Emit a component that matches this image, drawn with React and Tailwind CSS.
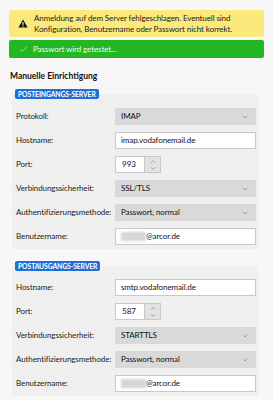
import { ChevronDown, ChevronUp, Check } from 'lucide-react'

const FONT = { fontFamily: 'Lato, "Liberation Sans", sans-serif' }

function Row({ label, children }) {
  return (
    <div className="flex h-[17px] items-center">
      <div className="w-[99px] shrink-0 whitespace-nowrap text-[8px] leading-[11px] tracking-[-0.1px] text-[#222]">{label}</div>
      {children}
    </div>
  )
}

function SelectBox({ value }) {
  return (
    <div className="flex h-[17px] w-[141px] items-center justify-between bg-[#d9d9d9] pl-[6px] pr-[7px] text-[8px] leading-[11px] tracking-[-0.1px] text-[#111]">
      <span>{value}</span>
      <ChevronDown className="h-[8px] w-[8px] text-[#666]" strokeWidth={1.5} />
    </div>
  )
}

function TextBox({ value, blurred }) {
  return (
    <div className="flex h-[17px] w-[141px] items-center border border-[#c8c8c8] bg-white pl-[5px] text-[8px] leading-[11px] tracking-[-0.1px] text-[#111]">
      {blurred && <span className="h-[9px] w-[25px] bg-[#d6d6d6] blur-[1px]" />}
      <span>{value}</span>
    </div>
  )
}

function PortBox({ value }) {
  return (
    <div className="flex h-[17px] items-stretch">
      <div className="flex w-[30px] items-center justify-end border border-[#c8c8c8] bg-white pr-[8px] text-[8px] leading-[11px] text-[#111]">
        {value}
      </div>
      <div className="flex w-[16px] flex-col items-center justify-center border border-l-0 border-[#c8c8c8] bg-[#e2e2e2] text-[#555]">
        <ChevronUp className="h-[7px] w-[8px]" strokeWidth={1.5} />
        <ChevronDown className="h-[7px] w-[8px]" strokeWidth={1.5} />
      </div>
    </div>
  )
}

function Section({ title, first, children }) {
  return (
    <div className="ml-[12px] flex w-[246px] flex-col">
      <div className="relative z-10 ml-[3px] flex h-[10px] self-start items-center rounded-[2px] bg-[#1f6fd6] px-[3px] text-[6.8px] font-bold leading-[8px] tracking-[-0.1px] text-white">
        {title}
      </div>
      <div className={`-mt-[5px] flex flex-col gap-[7px] bg-[#efefef] pb-[4px] pl-[4px] pr-[2px] ${first ? 'pt-[14px]' : 'pt-[13px]'}`}>
        {children}
      </div>
    </div>
  )
}

export default function App() {
  return (
    <div className="h-[400px] w-[273px] overflow-hidden bg-[#f7f7f7]" style={FONT}>
      <div className="mx-[9px] pt-[10px]">
        <div className="flex h-[27px] items-center gap-[6px] rounded-[2px] bg-[#fce97c] pl-[9px] text-[8px] leading-[11px] tracking-[-0.1px] text-[#222]">
          <svg width="10" height="9" viewBox="0 0 10 9" className="shrink-0">
            <path d="M5 0.5 L9.6 8.6 L0.4 8.6 Z" fill="#111" />
            <rect x="4.4" y="3" width="1.2" height="3" fill="#fce97c" />
            <rect x="4.4" y="6.7" width="1.2" height="1.1" fill="#fce97c" />
          </svg>
          <div className="whitespace-nowrap">
            Anmeldung auf dem Server fehlgeschlagen. Eventuell sind
            <br />
            Konfiguration, Benutzername oder Passwort nicht korrekt.
          </div>
        </div>
        <div className="mt-[3px] flex h-[18px] items-center gap-[5px] rounded-[2px] bg-[#24b624] pl-[10px] text-[8px] leading-[11px] tracking-[-0.1px] text-[#e8ffe8]">
          <Check className="h-[9px] w-[9px]" strokeWidth={1.5} />
          <span>Passwort wird getestet...</span>
        </div>
      </div>

      <div className="ml-[10px] mt-[12px] text-[8.5px] font-bold leading-[12px] text-[#111]">Manuelle Einrichtigung</div>

      <div className="mt-[7px]">
        <Section title="POSTEINGANGS-SERVER" first>
          <Row label="Protokoll:">
            <SelectBox value="IMAP" />
          </Row>
          <Row label="Hostname:">
            <TextBox value="imap.vodafonemail.de" />
          </Row>
          <Row label="Port:">
            <PortBox value="993" />
          </Row>
          <Row label="Verbindungssicherheit:">
            <SelectBox value="SSL/TLS" />
          </Row>
          <Row label="Authentifizierungsmethode:">
            <SelectBox value="Passwort, normal" />
          </Row>
          <Row label="Benutzername:">
            <TextBox value="@arcor.de" blurred />
          </Row>
        </Section>
      </div>

      <div className="mt-[12px]">
        <Section title="POSTAUSGANGS-SERVER">
          <Row label="Hostname:">
            <TextBox value="smtp.vodafonemail.de" />
          </Row>
          <Row label="Port:">
            <PortBox value="587" />
          </Row>
          <Row label="Verbindungssicherheit:">
            <SelectBox value="STARTTLS" />
          </Row>
          <Row label="Authentifizierungsmethode:">
            <SelectBox value="Passwort, normal" />
          </Row>
          <Row label="Benutzername:">
            <TextBox value="@arcor.de" blurred />
          </Row>
        </Section>
      </div>
    </div>
  )
}
